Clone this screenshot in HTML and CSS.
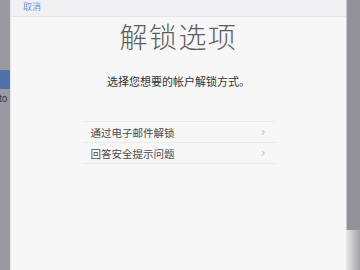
FILE: index.html
```html
<!DOCTYPE html>
<html lang="zh">
<head>
<meta charset="utf-8">
<link rel="stylesheet" href="styles.css">
</head>
<body>
<div class="screen">
  <div class="side-left">
    <div class="side-blue"></div>
    <div class="side-text">to</div>
  </div>
  <div class="sheet">
    <div class="header"><span class="cancel">取消</span></div>
    <h1 class="title">解锁选项</h1>
    <p class="subtitle">选择您想要的帐户解锁方式。</p>
    <ul class="options">
      <li class="option"><span>通过电子邮件解锁</span><span class="chev">›</span></li>
      <li class="option"><span>回答安全提示问题</span><span class="chev">›</span></li>
    </ul>
  </div>
  <div class="side-right">
    <div class="side-right-top"></div>
    <div class="side-right-bottom"></div>
  </div>
</div>
</body>
</html>
```

FILE: styles.css
```css
html, body {
  margin: 0;
  padding: 0;
}
body {
  width: 360px;
  height: 270px;
  overflow: hidden;
  background: #98989e;
  font-family: "Noto Sans CJK SC", "Noto Sans", sans-serif;
}
.screen {
  display: flex;
  width: 360px;
  height: 270px;
}
.side-left {
  width: 10px;
  flex: none;
  background: #9a9aa0;
  display: flex;
  flex-direction: column;
  padding-top: 70px;
  box-sizing: border-box;
}
.side-blue {
  height: 19px;
  background: #4f72ad;
}
.side-text {
  margin-top: 4px;
  font-family: "Liberation Sans", sans-serif;
  font-size: 10px;
  color: #3a3a40;
  line-height: 12px;
  margin-left: -1px;
}
.sheet {
  width: 336px;
  flex: none;
  background: #f7f7f7;
  display: flex;
  flex-direction: column;
  align-items: center;
  border-left: 1px solid #e2e2ea;
  box-sizing: border-box;
}
.header {
  align-self: stretch;
  height: 16px;
  background: #f1f1f3;
  border-bottom: 1px solid #e6e6e8;
  padding-left: 12px;
  font-size: 9px;
  line-height: 14px;
}
.cancel {
  color: #6a9ad6;
}
.title {
  margin: 2px 0 0;
  font-size: 28px;
  font-weight: 300;
  letter-spacing: 1.5px;
  color: #5e5e5e;
  line-height: 34px;
}
.subtitle {
  margin: 20px 0 0;
  font-size: 11px;
  line-height: 16px;
  color: #333;
}
.options {
  list-style: none;
  margin: 32px 0 0;
  padding: 0;
  width: 192px;
  border-top: 1px solid #ececec;
}
.option {
  display: flex;
  justify-content: space-between;
  align-items: center;
  height: 20px;
  padding: 0 9px 0 8px;
  border-bottom: 1px solid #e9e9e9;
  font-size: 10.5px;
  color: #4a4a4a;
}
.chev {
  color: #c2c2c2;
  font-size: 12px;
  font-family: "DejaVu Sans", sans-serif;
}
.side-right {
  flex: 1;
  display: flex;
  flex-direction: column;
}
.side-right-top {
  height: 230px;
  background: #929298;
  border-left: 1px solid #c8c8cc;
}
.side-right-bottom {
  flex: 1;
  background: linear-gradient(to right, #e8e8ea, #a4a4a8);
}
```
